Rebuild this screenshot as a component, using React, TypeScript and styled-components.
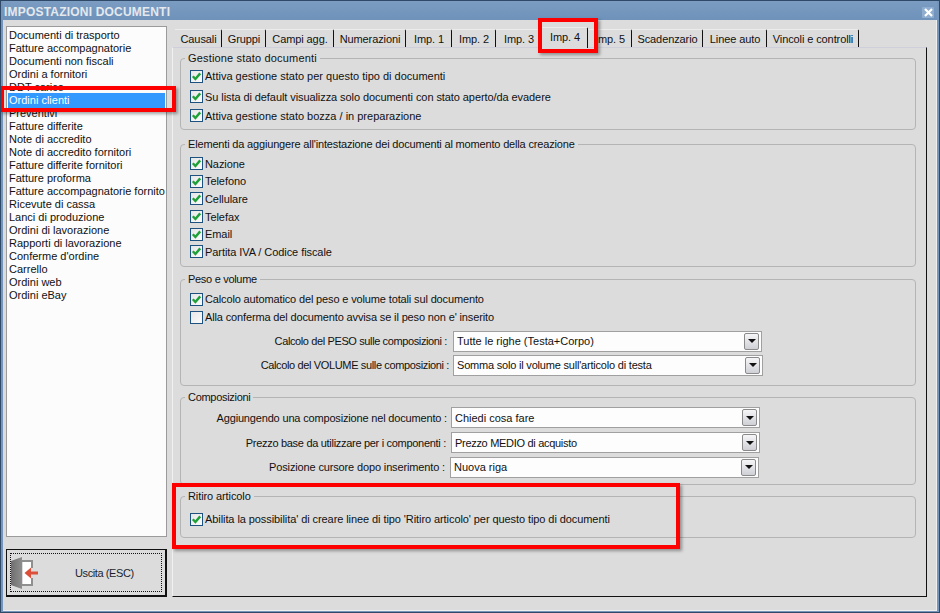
import React from "react";
import styled, { createGlobalStyle } from "styled-components";

const Global = createGlobalStyle`
  html, body { margin: 0; padding: 0; background: #dcdcdc; }
  * { box-sizing: border-box; }
`;

const Win = styled.div`
  position: relative;
  width: 940px;
  height: 613px;
  overflow: hidden;
  background: #dcdcdc;
  border: 1px solid #2f4a68;
  font-family: "Liberation Sans", Tahoma, sans-serif;
  font-size: 11px;
  color: #111;
`;

const Frame = styled.div`
  height: 100%;
  border: solid #7595ba;
  border-width: 0 2px 2px 2px;
  display: flex;
  flex-direction: column;
`;

const TitleBar = styled.div`
  height: 19px;
  flex: none;
  background: linear-gradient(#7c9cc2, #6e92ba);
  display: flex;
  align-items: center;
  justify-content: space-between;
  padding: 3px 3px 0 1px;
  color: #e4e9ee;
  font-weight: 700;
  font-size: 12px;
  letter-spacing: 0.2px;
`;

const CloseBtn = styled.div`
  width: 12px;
  height: 11px;
  display: flex;
  align-items: center;
  justify-content: center;
  background: #8fadcf;
  border-radius: 1px;
`;

const Body = styled.div`
  flex: 1;
  display: flex;
  gap: 5px;
  padding: 6px 9px 13px 3px;
  border-right: 1px solid #efefef;
  border-bottom: 1px solid #efefef;
`;

const Side = styled.div`
  width: 161px;
  flex: none;
  display: flex;
  flex-direction: column;
  gap: 12px;
`;

const List = styled.div`
  height: 511px;
  flex: none;
  background: #fcfcfc;
  border: 1px solid #9b9b9b;
  padding: 2px 1px 0;
`;

const Item = styled.div<{ $sel?: boolean }>`
  height: ${(p) => (p.$sel ? 15 : 13)}px;
  margin: ${(p) => (p.$sel ? "-1px 0" : "0")};
  line-height: ${(p) => (p.$sel ? 15 : 13)}px;
  padding-left: 1px;
  white-space: nowrap;
  overflow: hidden;
  position: relative;
  color: ${(p) => (p.$sel ? "#fff" : "#111")};
  background: ${(p) => (p.$sel ? "#3399ff" : "transparent")};
`;

const Exit = styled.div`
  height: 48px;
  flex: none;
  border: 1px solid #111;
  border-right-width: 2px;
  border-bottom-width: 2px;
  background: #dcdcdc;
  padding: 3px;
`;

const ExitInner = styled.div`
  height: 100%;
  border: 1px dotted #111;
  display: flex;
  align-items: center;
`;

const ExitLabel = styled.span`
  margin-left: 36px;
  color: #1a1f2c;
  letter-spacing: -0.4px;
`;

const Main = styled.div`
  flex: 1;
  min-width: 0;
  display: flex;
  flex-direction: column;
`;

const TabBar = styled.div`
  height: 21px;
  flex: none;
  display: flex;
  align-items: flex-end;
  padding-left: 3px;
`;

const Tab = styled.div<{ $w: number; $active?: boolean }>`
  width: ${(p) => p.$w}px;
  height: ${(p) => (p.$active ? 21 : 18)}px;
  flex: none;
  background: #dcdcdc;
  border-right: 1px solid #111;
  border-top: 1px solid #ececec;
  border-top-right-radius: 2px;
  display: flex;
  align-items: center;
  justify-content: center;
  white-space: nowrap;
  letter-spacing: -0.1px;
  padding-left: 1px;
  padding-bottom: ${(p) => (p.$active ? 3 : 0)}px;
  margin-bottom: ${(p) => (p.$active ? -1 : 0)}px;
  position: relative;
  z-index: ${(p) => (p.$active ? 1 : 0)};
`;

const Panel = styled.div`
  flex: 1;
  border-top: 1px solid #cfcfdb;
  border-left: 1px solid #f0f0f0;
  border-right: 1px solid #111;
  border-bottom: 1px solid #111;
  padding: 4px 10px 0 7px;
  display: flex;
  flex-direction: column;
`;

const Group = styled.fieldset<{ $h: number; $mb: number; $pt: number }>`
  height: ${(p) => p.$h}px;
  margin: 0 0 ${(p) => p.$mb}px;
  padding: ${(p) => p.$pt}px 0 0 9px;
  flex: none;
  border: 1px solid #b4b4b4;
  border-radius: 4px;
  min-width: 0;
`;

const Legend = styled.legend<{ $ls?: number }>`
  padding: 0 3px 0 3px;
  margin-left: -5px;
  line-height: 12px;
  font-size: 11px;
  letter-spacing: ${(p) => p.$ls ?? 0}px;
`;

const CheckRow = styled.div<{ $h: number; $ls?: number }>`
  height: ${(p) => p.$h}px;
  display: flex;
  align-items: center;
  gap: 2px;
  white-space: nowrap;
  letter-spacing: ${(p) => p.$ls ?? 0}px;
`;

const Box = styled.span`
  width: 13px;
  height: 13px;
  flex: none;
  background: linear-gradient(135deg, #e6e6e6, #fbfbfb);
  border: 1px solid #1c5180;
  display: flex;
  align-items: center;
  justify-content: center;
`;

const SelectRow = styled.div<{ $h: number; $mt?: number }>`
  height: ${(p) => p.$h}px;
  margin-top: ${(p) => p.$mt ?? 0}px;
  display: flex;
  align-items: center;
  white-space: nowrap;
`;

const SelectLabel = styled.span<{ $w: number; $ls?: number }>`
  width: ${(p) => p.$w}px;
  flex: none;
  text-align: right;
  letter-spacing: ${(p) => p.$ls ?? 0}px;
`;

const Select = styled.div<{ $w: number; $gap: number; $ls?: number }>`
  width: ${(p) => p.$w}px;
  height: 21px;
  margin-left: ${(p) => p.$gap}px;
  flex: none;
  background: #fdfdfd;
  border: 1px solid #a0a0a0;
  display: flex;
  align-items: center;
  justify-content: space-between;
  padding: 0 2px 0 3px;
  letter-spacing: ${(p) => p.$ls ?? 0}px;
`;

const Arrow = styled.span`
  width: 15px;
  height: 17px;
  flex: none;
  border: 1px solid #8a8a8a;
  border-radius: 2px;
  background: linear-gradient(#f6f6f8, #cfd0d6);
  display: flex;
  align-items: center;
  justify-content: center;

  &::after {
    content: "";
    border-left: 4px solid transparent;
    border-right: 4px solid transparent;
    border-top: 4px solid #111;
  }
`;

const Mark = styled.div<{ $x: number; $y: number; $w: number; $h: number }>`
  position: absolute;
  left: ${(p) => p.$x}px;
  top: ${(p) => p.$y}px;
  width: ${(p) => p.$w}px;
  height: ${(p) => p.$h}px;
  border: 4px solid #ff0000;
  box-shadow: 2px 2px 3px rgba(0, 0, 0, 0.35);
  pointer-events: none;
`;

const items = ["Documenti di trasporto","Fatture accompagnatorie","Documenti non fiscali","Ordini a fornitori","DDT carico","Ordini clienti","Preventivi","Fatture differite","Note di accredito","Note di accredito fornitori","Fatture differite fornitori","Fatture proforma","Fatture accompagnatorie fornito","Ricevute di cassa","Lanci di produzione","Ordini di lavorazione","Rapporti di lavorazione","Conferme d'ordine","Carrello","Ordini web","Ordini eBay"];

const tabs: [string, number][] = [["Causali",47],["Gruppi",44],["Campi agg.",68],["Numerazioni",72],["Imp. 1",46],["Imp. 2",44],["Imp. 3",46],["Imp. 4",46],["Imp. 5",44],["Scadenzario",71],["Linee auto",64],["Vincoli e controlli",92]];

const Check = ({ h, ls, children }: { h: number; ls?: number; children: React.ReactNode }) => (
  <CheckRow $h={h} $ls={ls}>
    <Box>
      <svg width="11" height="11" viewBox="0 0 11 11">
        <path d="M1.8 5.2 L4.4 8 L9.2 2.4" fill="none" stroke="#1fa038" strokeWidth="2.4" />
      </svg>
    </Box>
    {children}
  </CheckRow>
);

type SelProps = { label: string; lw: number; gap: number; w: number; value: string; h: number; mt?: number; ls?: number; vls?: number };

const Sel = ({ label, lw, gap, w, value, h, mt, ls, vls }: SelProps) => (
  <SelectRow $h={h} $mt={mt}>
    <SelectLabel $w={lw} $ls={ls}>{label}</SelectLabel>
    <Select $w={w} $gap={gap} $ls={vls}>
      {value}
      <Arrow />
    </Select>
  </SelectRow>
);

export default function App() {
  return (
    <Win>
      <Global />
      <Frame>
        <TitleBar>
          IMPOSTAZIONI DOCUMENTI
          <CloseBtn>
            <svg width="9" height="9" viewBox="0 0 9 9">
              <path d="M1 1 L8 8 M8 1 L1 8" stroke="#fff" strokeWidth="2.2" />
            </svg>
          </CloseBtn>
        </TitleBar>
        <Body>
          <Side>
            <List>
              {items.map((t) => (
                <Item key={t} $sel={t === "Ordini clienti"}>{t}</Item>
              ))}
            </List>
            <Exit>
              <ExitInner>
                <svg width="28" height="32" viewBox="0 0 28 32">
                  <defs>
                    <linearGradient id="door" x1="0" x2="1" y1="0" y2="0">
                      <stop offset="0" stopColor="#6f6f6f" />
                      <stop offset="1" stopColor="#8e8e8e" />
                    </linearGradient>
                  </defs>
                  <path d="M11 4 H21 V11 M21 21 V28 H11" fill="none" stroke="#8f8f8f" strokeWidth="2" />
                  <rect x="12" y="5" width="8" height="22" fill="#fff" />
                  <path d="M0 4 L11 0 V32 L0 28 Z" fill="url(#door)" />
                  <path d="M20 14.6 H27 V17.4 H20 L20 21.5 L13.5 16 L20 10.5 Z" fill="#dc4f38" />
                </svg>
                <ExitLabel>Uscita (ESC)</ExitLabel>
              </ExitInner>
            </Exit>
          </Side>
          <Main>
            <TabBar>
              {tabs.map(([t, w]) => (
                <Tab key={t} $w={w} $active={t === "Imp. 4"}>{t}</Tab>
              ))}
            </TabBar>
            <Panel>
              <Group $h={78} $mb={8} $pt={2}>
                <Legend $ls={0.17}>Gestione stato documenti</Legend>
                <Check h={20}>Attiva gestione stato per questo tipo di documenti</Check>
                <Check h={21} ls={-0.08}>Su lista di default visualizza solo documenti con stato aperto/da evadere</Check>
                <Check h={17}>Attiva gestione stato bozza / in preparazione</Check>
              </Group>
              <Group $h={129} $mb={6} $pt={5}>
                <Legend $ls={-0.17}>Elementi da aggiungere all'intestazione dei documenti al momento della creazione</Legend>
                {["Nazione","Telefono","Cellulare","Telefax","Email","Partita IVA / Codice fiscale"].map((t) => (
                  <Check key={t} h={17.6} ls={-0.07}>{t}</Check>
                ))}
              </Group>
              <Group $h={113} $mb={5} $pt={5}>
                <Legend $ls={-0.3}>Peso e volume</Legend>
                <Check h={18} ls={-0.14}>Calcolo automatico del peso e volume totali sul documento</Check>
                <CheckRow $h={18} $ls={-0.14}><Box />Alla conferma del documento avvisa se il peso non e' inserito</CheckRow>
                <Sel mt={3} h={24} lw={257} gap={6} w={309} ls={-0.38} label="Calcolo del PESO sulle composizioni :" value="Tutte le righe (Testa+Corpo)" />
                <Sel h={24} lw={259} gap={4} w={310} ls={-0.36} vls={-0.2} label="Calcolo del VOLUME sulle composizioni :" value="Somma solo il volume sull'articolo di testa" />
              </Group>
              <Group $h={94} $mb={5} $pt={2}>
                <Legend $ls={-0.3}>Composizioni</Legend>
                <Sel h={25} lw={257} gap={4} w={309} ls={-0.17} label="Aggiungendo una composizione nel documento :" value="Chiedi cosa fare" />
                <Sel h={25} lw={256} gap={5} w={309} ls={-0.3} vls={-0.3} label="Prezzo base da utilizzare per i componenti :" value="Prezzo MEDIO di acquisto" />
                <Sel h={24} lw={255} gap={5} w={309} ls={-0.14} label="Posizione cursore dopo inserimento :" value="Nuova riga" />
              </Group>
              <Group $h={48} $mb={0} $pt={7}>
                <Legend $ls={-0.1}>Ritiro articolo</Legend>
                <Check h={20} ls={-0.08}>Abilita la possibilita' di creare linee di tipo 'Ritiro articolo' per questo tipo di documenti</Check>
              </Group>
            </Panel>
          </Main>
        </Body>
      </Frame>
      <Mark $x={-1} $y={85} $w={176} $h={26} />
      <Mark $x={537} $y={17} $w={60} $h={35} />
      <Mark $x={171} $y={482} $w={508} $h={66} />
    </Win>
  );
}
